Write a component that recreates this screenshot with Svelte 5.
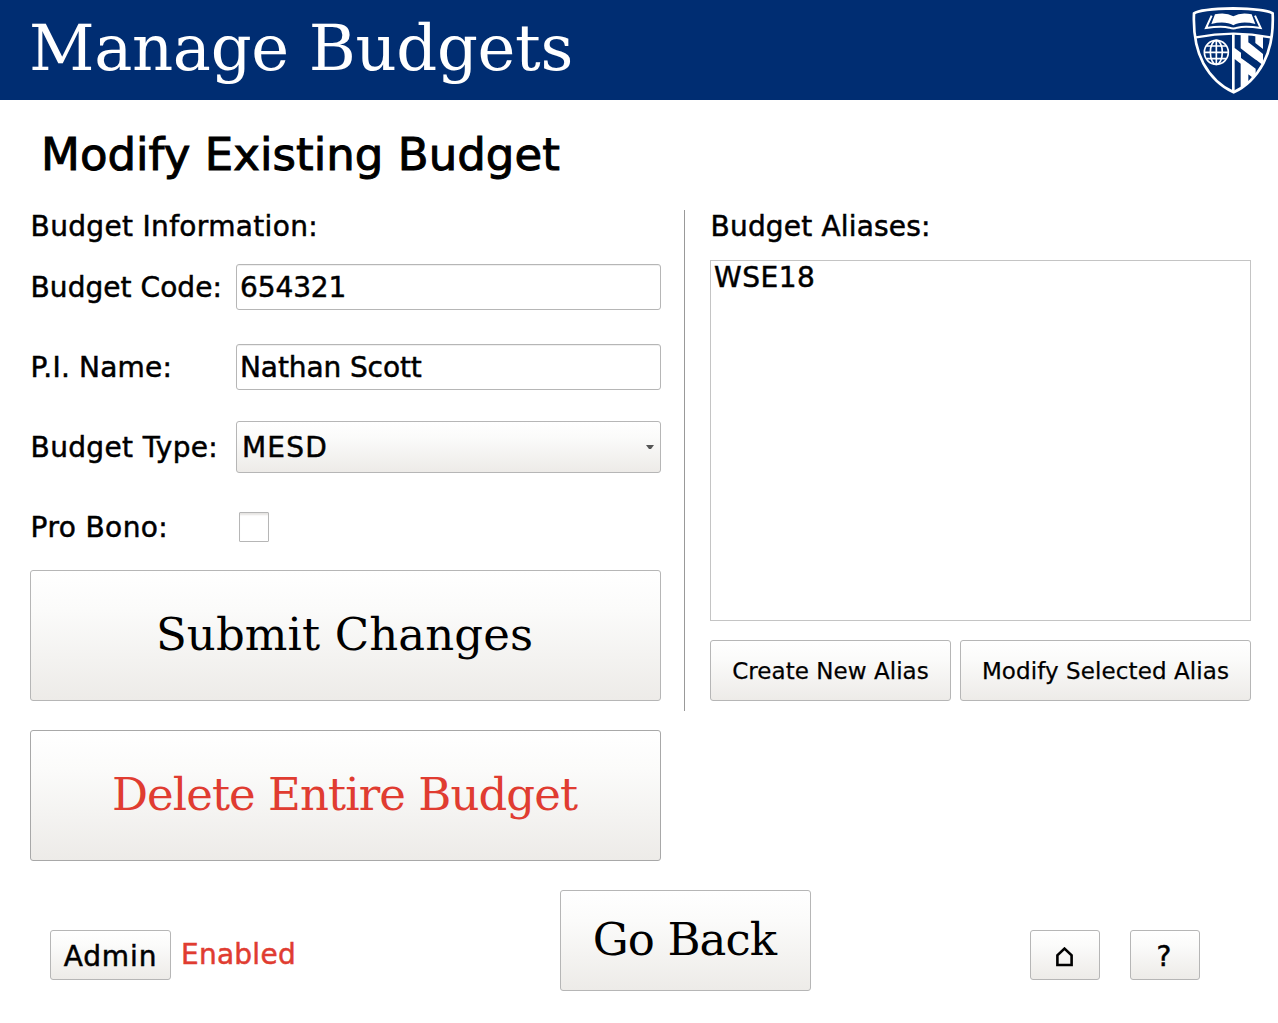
<script>
  let code = $state('654321');
  let name = $state('Nathan Scott');
  let proBono = $state(false);
  const aliases = ['WSE18'];
</script>

<div class="window">
  <header>
    <h1>Manage Budgets</h1>
    <svg class="crest" viewBox="0 0 294 300" aria-label="University crest">
      <defs>
        <clipPath id="shield"><path d="M42 40Q108 33 160 25Q212 33 278 40C284 108 272 152 252 190C230 232 196 262 161 278C126 262 90 232 68 190C48 152 36 108 42 40Z" /></clipPath>
      </defs>
      <path class="line" stroke-width="8" d="M42 40Q60 27 160 25Q260 27 278 40C281 108 270 152 250 190C228 230 196 261 161 277C126 261 92 230 70 190C50 152 39 108 42 40Z" />
      <path class="line" stroke-width="7" d="M48 112Q160 90 272 112" />
      <!-- open book -->
      <path class="line" stroke-width="6" d="M95 47L78 84Q125 77 148 83Q160 88 172 83Q195 77 242 84L225 47" />
      <path class="white" d="M105 43Q138 36 160 49Q182 36 215 43L226 72Q184 62 160 76Q136 62 94 72Z" />
      <!-- counterchanged stripes -->
      <g clip-path="url(#shield)" class="white">
        <path d="M156 102H164V280H156ZM182 102H205V163L182 145ZM226 106H249V147L226 129ZM163 143L183 158V192L163 176ZM204 126L227 144V179L204 162ZM226 143L249 162V196L226 178ZM182 173L205 190V262H182ZM204 189L227 206V240L204 222Z" />
      </g>
      <!-- globe -->
      <g class="line" stroke-width="5">
        <circle cx="109" cy="157" r="36" />
        <ellipse cx="109" cy="157" rx="18" ry="36" />
        <path d="M109 121V193M73 157H145M80 138H138M80 176H138" />
      </g>
    </svg>
  </header>

  <main>
    <h2>Modify Existing Budget</h2>
    <div class="columns">
      <section class="info">
        <h3 class="t-info">Budget Information:</h3>
        <div class="row"><label class="label t-code" for="code">Budget Code:</label><input id="code" class="field t-num" bind:value={code} /></div>
        <div class="row"><label class="label t-pi" for="name">P.I. Name:</label><input id="name" class="field t-name" bind:value={name} /></div>
        <div class="row">
          <span class="label t-type">Budget Type:</span>
          <button class="combo"><span>MESD</span><svg width="8" height="4" viewBox="0 0 8 4"><path d="M0 0H8L5 4H3Z" /></svg></button>
        </div>
        <div class="row"><label class="label t-bono" for="bono">Pro Bono:</label><input id="bono" class="check" type="checkbox" bind:checked={proBono} /></div>
        <button class="big t-submit">Submit Changes</button>
      </section>

      <section class="aliases">
        <h3 class="t-alias">Budget Aliases:</h3>
        <ul>
          {#each aliases as alias}<li>{alias}</li>{/each}
        </ul>
        <div class="actions">
          <button class="create">Create New Alias</button>
          <button class="modify">Modify Selected Alias</button>
        </div>
      </section>
    </div>
    <button class="big delete">Delete Entire Budget</button>
  </main>

  <footer>
    <button class="admin">Admin</button>
    <span class="enabled">Enabled</span>
    <button class="back">Go Back</button>
    <button class="small home" aria-label="Home">
      <svg width="17" height="20" viewBox="0 0 17 20"><path d="M1.4 18V8.2L8.5 1.6L15.6 8.2V18Z" /></svg>
    </button>
    <button class="small help">?</button>
  </footer>
</div>

<style>
  :global(body) { margin: 0; background: #fff; }
  .window {
    width: 1278px; height: 1023px; overflow: hidden; background: #fff; color: #000;
    display: flex; flex-direction: column;
    font: 28px "DejaVu Sans", "Noto Sans", sans-serif;
    -webkit-text-stroke: 0.5px currentColor;
  }
  * { box-sizing: border-box; }
  header {
    height: 100px; flex: none; background: #002d72; color: #fff;
    display: flex; justify-content: space-between; align-items: center;
    padding-left: 29px;
  }
  h1, h2, h3, ul { margin: 0; padding: 0; font-weight: 400; white-space: nowrap; }
  h1 {
    font: 64px/98px "DejaVu Serif", serif; letter-spacing: -0.35px;
    padding-bottom: 5px; -webkit-text-stroke: 0;
  }
  .crest { width: 98px; height: 100px; }
  .line { fill: none; stroke: #fff; }
  .white { fill: #fff; }

  main { height: 761px; flex: none; padding-left: 30px; display: flex; flex-direction: column; align-items: flex-start; }
  h2 { font-size: 45px; line-height: 110px; letter-spacing: 0.05px; padding-left: 11px; -webkit-text-stroke: 1px #000; }
  .columns { display: flex; height: 501px; margin-bottom: 19px; }
  .info { width: 655px; height: 501px; border-right: 1px solid #999; padding-right: 23px; }
  .aliases { width: 567px; padding-left: 25px; }
  h3 { font-size: 28px; line-height: 33px; height: 37px; text-indent: 0.6px; }
  .aliases h3 { height: 50px; }
  .row { display: flex; align-items: center; height: 80px; }
  .label { width: 206px; flex: none; white-space: nowrap; text-indent: 0.6px; }
  .field {
    width: 425px; height: 46px; border: 1px solid #b6b6b6; border-radius: 3px; background: #fff;
    padding: 0 2px 0 3px; font: inherit; color: inherit; outline: 0;
    box-shadow: inset 0 1px #f0f0f0; -webkit-text-stroke: inherit;
  }
  button {
    display: flex; align-items: center; justify-content: center; padding: 0; margin: 0;
    border: 1px solid #b6b6b6; border-radius: 3px; background: linear-gradient(#fff, #fbfbfa 30%, #edebe8);
    font: inherit; color: inherit; white-space: nowrap; -webkit-text-stroke: inherit;
  }
  .combo { width: 425px; height: 52px; justify-content: space-between; padding: 0 6px 0 5px; letter-spacing: 1.2px; }
  .combo path { fill: #555; }
  .check {
    appearance: none; width: 30px; height: 30px; margin: 0 0 0 3px; background: #fff;
    border: 1px solid #b6b6b6; border-radius: 1px; box-shadow: inset 0 3px 2px -1px #e6e4e2;
  }
  .big { width: 631px; height: 131px; flex: none; font: 45px "DejaVu Serif", serif; padding-bottom: 2px; -webkit-text-stroke: 0; }
  .info .big { margin-top: 3px; padding-right: 2px; }
  .t-info { letter-spacing: 0.33px; }
  .t-code { letter-spacing: 0.05px; }
  .t-pi { letter-spacing: 0.2px; }
  .t-type { letter-spacing: 0.35px; }
  .t-bono { letter-spacing: 0.4px; }
  .t-num { letter-spacing: -0.1px; }
  .t-name { letter-spacing: -0.1px; }
  .t-alias { letter-spacing: 0.18px; }
  .t-submit { letter-spacing: 0.1px; }
  .delete { letter-spacing: -0.94px; color: #e03c31; border-color: #a8a8a8; padding-right: 2px; }
  ul { list-style: none; width: 541px; height: 361px; border: 1px solid #c4c4c4; padding-left: 3px; line-height: 34px; letter-spacing: 0.5px; }
  .actions { display: flex; gap: 9px; margin-top: 19px; font-size: 23px; -webkit-text-stroke: 0.25px #000; }
  .create { width: 241px; height: 61px; letter-spacing: 0.05px; }
  .modify { width: 291px; height: 61px; letter-spacing: 0.1px; }

  footer { display: flex; align-items: flex-start; margin-top: 29px; padding: 0 78px 0 50px; height: 133px; }
  .admin { width: 121px; height: 50px; letter-spacing: 0.9px; }
  .enabled { width: 389px; line-height: 50px; padding: 0 0 0 10px; color: #e03c31; letter-spacing: 0.25px; }
  .back { width: 251px; height: 101px; font: 45px "DejaVu Serif", serif; letter-spacing: -0.9px; padding: 0 2px 2px 0; -webkit-text-stroke: 0; }
  .admin, .enabled, .small { margin-top: 40px; }
  .admin, .help { padding-top: 2px; }
  .help { padding-right: 2px; }
  .small { width: 70px; height: 50px; }
  .home { margin-right: 30px; margin-left: 219px; padding-right: 1px; }
  .home svg { margin-top: 4px; }
  .home path { fill: none; stroke: #000; stroke-width: 2.6; }
</style>
